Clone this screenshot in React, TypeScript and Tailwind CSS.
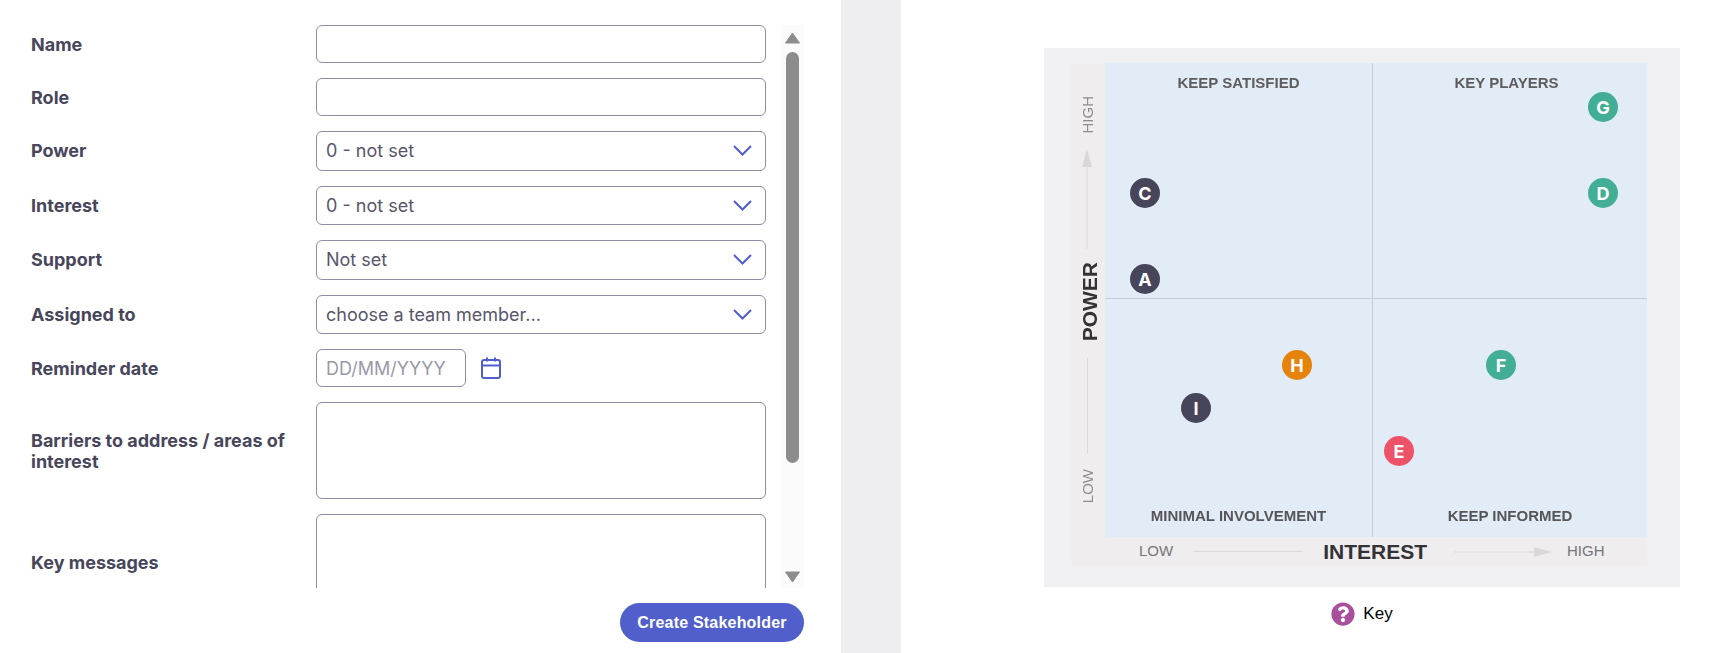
import { FaQuestionCircle } from 'react-icons/fa';

const inputClass =
  "w-full rounded-[6px] border border-[#8f8ca5] bg-white px-[9px] font-['Inter',sans-serif] text-[18px] text-[#57566a] outline-none";

const dots = [
  { id: 'C', color: 'bg-[#47455a]', pos: 'left-[25px] top-[115px]' },
  { id: 'A', color: 'bg-[#47455a]', pos: 'left-[25px] top-[201px]' },
  { id: 'G', color: 'bg-[#41ae95]', pos: 'left-[483px] top-[29px]' },
  { id: 'D', color: 'bg-[#41ae95]', pos: 'left-[483px] top-[115px]' },
  { id: 'H', color: 'bg-[#e5830c]', pos: 'left-[177px] top-[287px]' },
  { id: 'I', color: 'bg-[#47455a]', pos: 'left-[76px] top-[330px]' },
  { id: 'F', color: 'bg-[#41ae95]', pos: 'left-[381px] top-[287px]' },
  { id: 'E', color: 'bg-[#ee5268]', pos: 'left-[279px] top-[373px]' },
];

function Row({ label, children }: { label: string; children: React.ReactNode }) {
  return (
    <div className="grid grid-cols-[285px_1fr] items-center">
      <label className="font-['Inter',sans-serif] text-[18px] leading-[21px] font-bold text-[#47465a]">{label}</label>
      <div className="flex items-center">{children}</div>
    </div>
  );
}

function Select({ value }: { value: string }) {
  return (
    <div className="relative w-full">
      <select defaultValue={value} className={`${inputClass} block h-[39.5px] appearance-none`}>
        <option>{value}</option>
      </select>
      <svg className="pointer-events-none absolute top-[14px] right-[14px] h-[11px] w-[19px]" viewBox="0 0 19 11" fill="none">
        <path d="M1 1l8.5 8.5L18 1" stroke="#4f5fcf" strokeWidth="2" />
      </svg>
    </div>
  );
}

function Form() {
  return (
    <div className="flex h-[563px] w-[773px] gap-[15px]">
      <div className="flex min-w-0 flex-1 flex-col gap-[15px] overflow-hidden">
        <Row label="Name">
          <input className={`${inputClass} h-[38px]`} />
        </Row>
        <Row label="Role">
          <input className={`${inputClass} h-[38px]`} />
        </Row>
        <Row label="Power">
          <Select value="0 - not set" />
        </Row>
        <Row label="Interest">
          <Select value="0 - not set" />
        </Row>
        <Row label="Support">
          <Select value="Not set" />
        </Row>
        <Row label="Assigned to">
          <Select value="choose a team member..." />
        </Row>
        <Row label="Reminder date">
          <input
            placeholder="DD/MM/YYYY"
            className={`${inputClass} h-[38px] !w-[150px] placeholder:text-[#9a99a8]`}
          />
          <svg className="ml-[15px] h-[22px] w-[20px]" viewBox="0 0 20 22" fill="none" stroke="#4f5fcf" strokeWidth="2">
            <rect x="1" y="3" width="18" height="18" rx="2" />
            <path d="M1 8.5h18M6 0.5v4M14 0.5v4" />
          </svg>
        </Row>
        <Row label="Barriers to address / areas of interest">
          <textarea className={`${inputClass} h-[97px] resize-none`} />
        </Row>
        <Row label="Key messages">
          <textarea className={`${inputClass} h-[97px] shrink-0 resize-none`} />
        </Row>
      </div>
      {/* Scrollbar */}
      <div className="flex w-[23px] flex-col items-center bg-[#fbfbfb]">
        <svg className="mt-[7px] h-[12px] w-[15px]" viewBox="0 0 15 12">
          <path d="M7.5 1L14.5 11H0.5z" fill="#8c8c8c" stroke="#8c8c8c" strokeLinejoin="round" />
        </svg>
        <div className="mt-[8px] h-[411px] w-[13px] rounded-[7px] bg-[#8c8c8c]" />
        <svg className="mt-[108px] h-[12px] w-[15px]" viewBox="0 0 15 12">
          <path d="M7.5 11L14.5 1H0.5z" fill="#8c8c8c" stroke="#8c8c8c" strokeLinejoin="round" />
        </svg>
      </div>
    </div>
  );
}

function Matrix() {
  const quadrant = "pt-[12px] text-center font-['Liberation_Sans',sans-serif] text-[15px] leading-[16px] font-bold text-[#5f5c5e] blur-[0.4px]";
  const quadrantBottom = "flex flex-col justify-end pb-[13px] text-center font-['Liberation_Sans',sans-serif] text-[15px] leading-[16px] font-bold text-[#565558] blur-[0.4px]";
  return (
    <div className="grid h-[503px] w-[576px] grid-cols-[34px_1fr] grid-rows-[474px_29px] bg-[#efedee] font-['Liberation_Sans',sans-serif]">
      {/* Power axis */}
      <div className="flex flex-col items-center pt-[33px] pr-[2px] text-[#8f8c8e]">
        <span className="text-[15px] leading-[17px] rotate-180 [writing-mode:vertical-rl]">HIGH</span>
        <svg className="mt-[15px] h-[100px] w-[12px]" viewBox="0 0 12 100">
          <path d="M6 16V100" stroke="#dcdadb" strokeWidth="1" />
          <path d="M6 0L11 18H1z" fill="#d9d8d9" />
        </svg>
        <span className="mt-[13px] ml-[4px] text-[21px] leading-[23px] font-bold text-[#343236] rotate-180 [writing-mode:vertical-rl]">POWER</span>
        <div className="mt-[17px] h-[96px] w-px bg-[#dcdadb]" />
        <span className="mt-[15px] text-[15px] leading-[17px] rotate-180 [writing-mode:vertical-rl]">LOW</span>
      </div>

      {/* Quadrants */}
      <div className="relative grid grid-cols-[268px_1fr] grid-rows-[236px_1fr] bg-[#e2ecf7]">
        <div className={`${quadrant} border-r border-b border-[#c4ccd6]`}>KEEP SATISFIED</div>
        <div className={`${quadrant} border-b border-[#c4ccd6] pr-[7px]`}>KEY PLAYERS</div>
        <div className={`${quadrantBottom} border-r border-[#c4ccd6]`}>MINIMAL INVOLVEMENT</div>
        <div className={quadrantBottom}>KEEP INFORMED</div>
        {dots.map((dot) => (
          <div
            key={dot.id}
            className={`absolute flex h-[30px] w-[30px] items-center justify-center rounded-full font-['Inter',sans-serif] text-[18px] font-bold text-white ${dot.color} ${dot.pos}`}
          >
            {dot.id}
          </div>
        ))}
      </div>

      <div />

      {/* Interest axis */}
      <div className="flex items-center pl-[34px] text-[15px] text-[#77757a]">
        <span>LOW</span>
        <div className="mr-[20px] ml-[20px] h-px w-[110px] bg-[#dcdadb]" />
        <span className="text-[21px] leading-[23px] font-bold text-[#343236]">INTEREST</span>
        <svg className="ml-[27px] h-[12px] w-[98px]" viewBox="0 0 98 12">
          <path d="M0 6H82" stroke="#dcdadb" strokeWidth="1" />
          <path d="M98 6L80 1V11z" fill="#d9d8d9" />
        </svg>
        <span className="ml-[15px]">HIGH</span>
      </div>
    </div>
  );
}

export default function App() {
  return (
    <div className="flex h-[653px] w-[1714px] overflow-hidden bg-white">
      {/* Left panel */}
      <div className="w-[841px] shrink-0 pt-[25px] pl-[31px]">
        <Form />
        <div className="mt-[15px] flex w-[773px] justify-end">
          <button className="h-[39px] w-[184px] rounded-full bg-[#515fcc] font-['Liberation_Sans',sans-serif] text-[16px] font-bold tracking-[0.2px] text-white">
            Create Stakeholder
          </button>
        </div>
      </div>

      <div className="w-[60px] shrink-0 bg-[#eeeef0]" />

      {/* Right panel */}
      <div className="pt-[48px] pl-[143px]">
        <div className="w-[636px] bg-[#f0f0f2] pt-[15px] pr-[33px] pb-[21px] pl-[27px]">
          <Matrix />
        </div>
        <div className="mt-[15px] flex items-center justify-center gap-[8px]">
          <FaQuestionCircle className="h-[24px] w-[24px] text-[#a8509b]" />
          <span className="font-['Liberation_Sans',sans-serif] text-[17px] leading-[24px] text-black">Key</span>
        </div>
      </div>
    </div>
  );
}
